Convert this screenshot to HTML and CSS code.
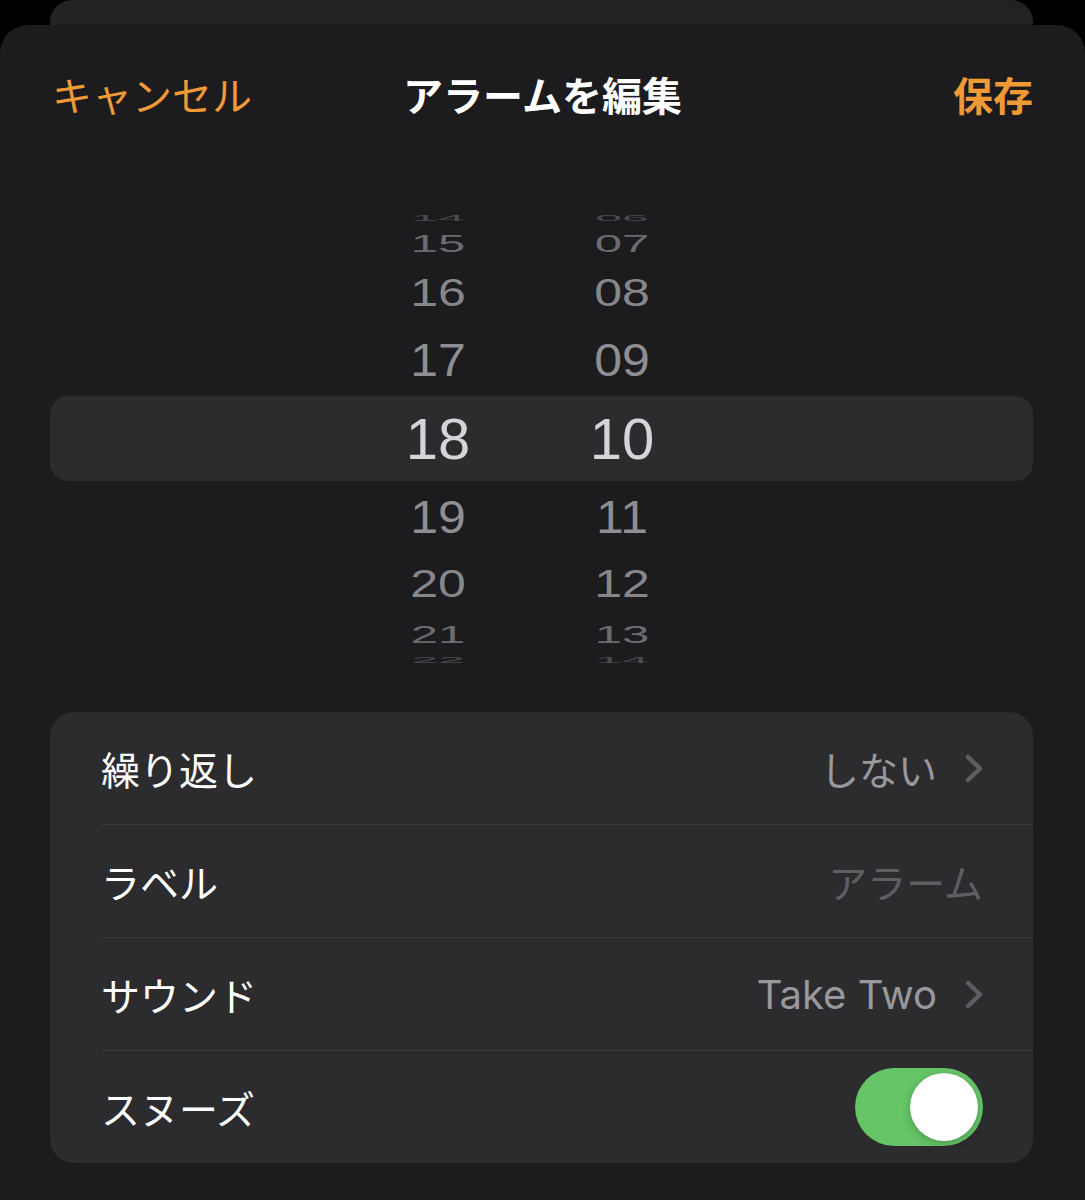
FILE: index.html
```html
<!DOCTYPE html>
<html lang="ja">
<head>
<meta charset="utf-8">
<title>アラームを編集</title>
<link rel="stylesheet" href="styles.css">
</head>
<body>
<div class="back-sheet"></div>
<div class="sheet">
  <header class="nav">
    <span class="nav-cancel">キャンセル</span>
    <h1 class="nav-title">アラームを編集</h1>
    <span class="nav-save">保存</span>
  </header>

  <div class="picker">
    <div class="prow far top"><div class="cell"><span>14</span></div><div class="cell"><span>06</span></div></div>
    <div class="prow out"><div class="cell"><span>15</span></div><div class="cell"><span>07</span></div></div>
    <div class="prow mid"><div class="cell"><span>16</span></div><div class="cell"><span>08</span></div></div>
    <div class="prow near"><div class="cell"><span>17</span></div><div class="cell"><span>09</span></div></div>
    <div class="prow sel"><div class="cell"><span>18</span></div><div class="cell"><span>10</span></div></div>
    <div class="prow near"><div class="cell"><span>19</span></div><div class="cell"><span>11</span></div></div>
    <div class="prow mid"><div class="cell"><span>20</span></div><div class="cell"><span>12</span></div></div>
    <div class="prow out"><div class="cell"><span>21</span></div><div class="cell"><span>13</span></div></div>
    <div class="prow far bottom"><div class="cell"><span>22</span></div><div class="cell"><span>14</span></div></div>
  </div>

  <div class="list">
    <div class="row">
      <span class="row-label">繰り返し</span>
      <span class="row-value">しない</span>
      <svg class="chevron" width="18" height="29" viewBox="0 0 18 29"><path d="M3 3 L15 14.5 L3 26" fill="none" stroke="#5e5e62" stroke-width="4.5" stroke-linecap="round" stroke-linejoin="round"/></svg>
    </div>
    <div class="row">
      <span class="row-label">ラベル</span>
      <span class="row-placeholder">アラーム</span>
    </div>
    <div class="row">
      <span class="row-label">サウンド</span>
      <span class="row-value latin">Take Two</span>
      <svg class="chevron" width="18" height="29" viewBox="0 0 18 29"><path d="M3 3 L15 14.5 L3 26" fill="none" stroke="#5e5e62" stroke-width="4.5" stroke-linecap="round" stroke-linejoin="round"/></svg>
    </div>
    <div class="row last">
      <span class="row-label">スヌーズ</span>
      <span class="toggle"><span class="knob"></span></span>
    </div>
  </div>
</div>
</body>
</html>
```

FILE: styles.css
```css
* { box-sizing: border-box; }

html, body {
  margin: 0;
  padding: 0;
  background: #000;
}

body {
  width: 1085px;
  height: 1200px;
  overflow: hidden;
  font-family: "Noto Sans CJK JP", "Inter", sans-serif;
  color: #fff;
}

.back-sheet {
  height: 25px;
  margin: 0 52px 0 50px;
  background: #222224;
  border-radius: 22px 22px 0 0;
}

.sheet {
  height: 1175px;
  background: #1c1c1e;
  border-radius: 28px 28px 0 0;
  overflow: hidden;
}

/* ---------- navigation ---------- */
.nav {
  height: 138px;
  padding: 0 52px 0 52px;
  display: grid;
  grid-template-columns: 1fr auto 1fr;
  align-items: center;
}

.nav-cancel {
  font-size: 40px;
  color: #f09a36;
  justify-self: start;
}

.nav-title {
  margin: 0;
  font-size: 40px;
  font-weight: 700;
  color: #fff;
}

.nav-save {
  font-size: 40px;
  font-weight: 700;
  color: #f09a36;
  justify-self: end;
}

/* ---------- picker ---------- */
.picker {
  margin-top: 49px;
  height: 452px;
  display: flex;
  flex-direction: column;
  overflow: hidden;
  font-family: "Liberation Sans", "Inter", sans-serif;
}

.prow {
  margin: 0 52px 0 50px;
  padding-left: 328px;
  display: flex;
  gap: 64px;
  overflow: hidden;
  flex: none;
}

.cell {
  width: 120px;
  display: flex;
  align-items: center;
  justify-content: center;
}

.cell span {
  display: inline-block;
  line-height: 1;
}

.prow.far  { height: 12px; }
.prow.out  { height: 38px; }
.prow.mid  { height: 62px; }
.prow.near { height: 72px; }
.prow.sel  {
  height: 85px;
  background: #2c2c2f;
  border-radius: 18px;
}

.prow.far.top .cell { align-items: flex-end; }
.prow.far.bottom .cell { align-items: flex-start; }

.prow.sel span  { font-size: 58px; color: #d4d4d9; }
.prow.near span { font-size: 50px; color: #8e8e93; transform: scaleY(0.92); }
.prow.mid span  { font-size: 50px; color: #87878b; transform: scaleY(0.76); }
.prow.out span  { font-size: 49px; color: #6c6c70; transform: scaleY(0.5); }
.prow.far span  { font-size: 48px; color: #4a4a4e; transform: scaleY(0.2); }
.prow.far.top span { transform-origin: 50% 96%; }
.prow.far.bottom span { transform-origin: 50% 6%; }

/* ---------- list ---------- */
.list {
  margin: 48px 52px 0 50px;
  background: #2c2c2e;
  border-radius: 24px;
  overflow: hidden;
}

.row {
  height: 113px;
  margin-left: 51px;
  padding-right: 50px;
  border-bottom: 1px solid #3c3c3f;
  display: flex;
  align-items: center;
}

.row.last {
  border-bottom: none;
  height: 112px;
}

.row-label {
  font-size: 39px;
  color: #fff;
  flex: 1;
}

.row-value {
  font-size: 39px;
  color: #98989d;
}

.row-value.latin {
  font-family: "Inter", "Liberation Sans", sans-serif;
  font-size: 40px;
}

.row-placeholder {
  font-size: 39px;
  color: #5f5f63;
}

.chevron {
  margin-left: 28px;
  flex: none;
}

.toggle {
  width: 128px;
  height: 78px;
  border-radius: 39px;
  background: #65c466;
  display: flex;
  align-items: center;
  justify-content: flex-end;
  padding-right: 5px;
}

.knob {
  width: 68px;
  height: 68px;
  border-radius: 50%;
  background: #fff;
  box-shadow: 0 3px 8px rgba(0, 0, 0, 0.2), 0 0 1px rgba(0, 0, 0, 0.2);
}
```
